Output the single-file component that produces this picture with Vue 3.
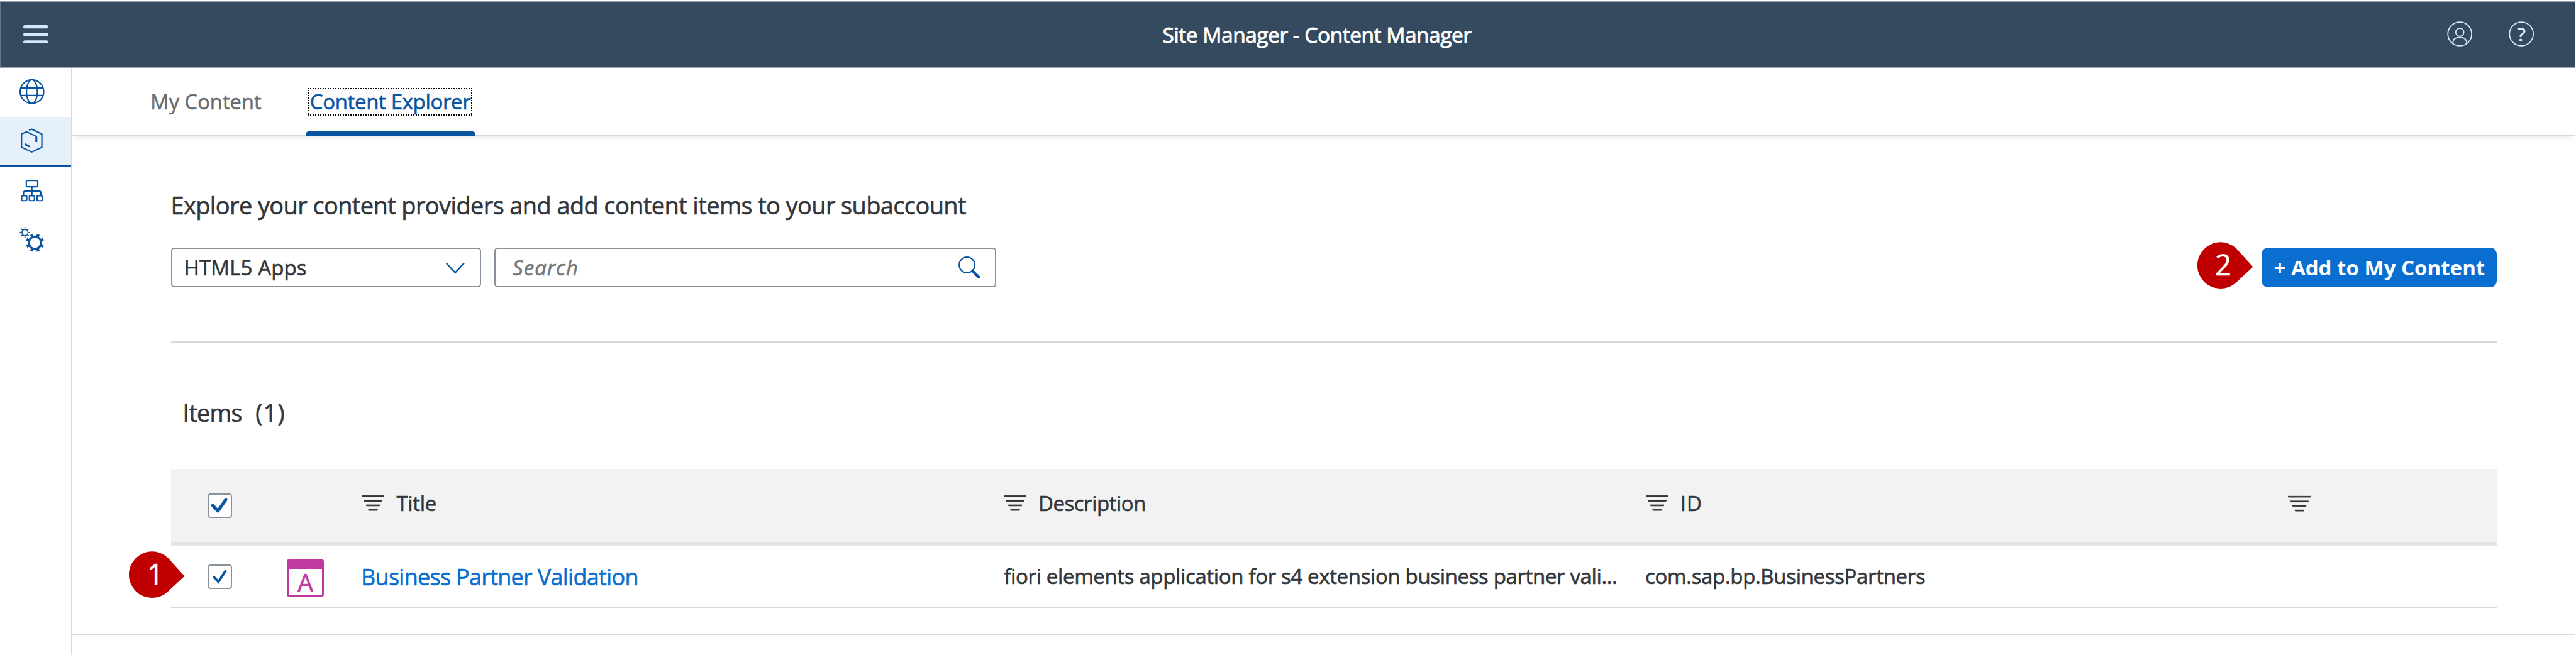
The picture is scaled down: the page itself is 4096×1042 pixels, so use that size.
<script setup>
const columns = [
  { key: 'title', label: 'Title' },
  { key: 'description', label: 'Description' },
  { key: 'id', label: 'ID' },
  { key: 'actions', label: '' },
]
const filterLines = [
  'M0 1.4H36.6L35.9 3H0.7Z',
  'M3.6 9H33L32.3 10.7H4.3Z',
  'M7.2 16.3H29.4L28.7 18H7.9Z',
  'M10.9 23.6H25.7L25 25.3H11.6Z',
]
</script>

<template>
  <div class="app">
    <header class="shell">
      <svg class="menu" viewBox="0 0 40 30">
        <path d="M2.7 2.7H37.3M2.7 15H37.3M2.7 27.3H37.3" />
      </svg>
      <h1 class="shell-title">Site Manager - Content Manager</h1>
      <div class="shell-actions">
        <svg class="shell-icon" viewBox="-3 -3 47 47">
          <circle cx="20.5" cy="20.3" r="19.2" />
          <circle cx="20.5" cy="17.6" r="6.5" />
          <path d="M9.2 35.2C9.4 29 13 25.7 20.5 25.7S31.6 29 31.8 35.2" />
        </svg>
        <svg class="shell-icon" viewBox="-3 -3 47 47">
          <circle cx="20.5" cy="20.3" r="19.2" />
          <text x="20.5" y="32" text-anchor="middle">?</text>
        </svg>
      </div>
    </header>

    <div class="body">
      <nav class="side">
        <a class="side-item">
          <svg viewBox="0 0 40 40">
            <circle cx="20" cy="20" r="19" />
            <ellipse cx="20" cy="20" rx="8.8" ry="19" />
            <path d="M2 14H38M2 26.2H38" />
          </svg>
        </a>
        <a class="side-item selected">
          <svg viewBox="0 0 40 40">
            <path d="M15.3 3.4L19.7 1.5L36 9.3V30.7L19.7 38.4L3.3 30.7V9.3L11.3 5.7L27.3 13.3V22.4" />
            <path class="thick" d="M8.3 25.4L16.3 29.6M27.1 14V22.4" />
          </svg>
        </a>
        <a class="side-item">
          <svg viewBox="0 0 40 40">
            <rect x="11" y="4.3" width="18.4" height="10" rx="1.6" />
            <path d="M20 14.3V28.5M6.5 28.5V24.3Q6.5 21.2 9.8 21.2H31.2Q34.5 21.2 34.5 24.3V28.5" />
            <rect x="3.5" y="28.7" width="8.2" height="8" rx="1.8" />
            <rect x="15.9" y="28.7" width="8.2" height="8" rx="1.8" />
            <rect x="28.3" y="28.7" width="8.2" height="8" rx="1.8" />
          </svg>
        </a>
        <a class="side-item">
          <svg viewBox="0 0 40 40">
            <circle cx="8.8" cy="9" r="4.9" stroke-width="1.7" />
            <circle cx="8.8" cy="9" r="7" stroke-width="3" pathLength="16" stroke-dasharray="0.6 1.4" stroke-dashoffset="0.3" />
            <circle cx="24.9" cy="25.6" r="9.9" stroke-width="3.4" />
            <circle cx="24.9" cy="25.6" r="12.6" stroke-width="4" pathLength="16" stroke-dasharray="0.9 1.1" stroke-dashoffset="-0.55" />
          </svg>
        </a>
      </nav>

      <main class="main">
        <div class="tabs">
          <a class="tab tab-first"><span class="tab-text">My Content</span></a>
          <a class="tab active"><span class="tab-text focus">Content Explorer</span></a>
        </div>

        <section class="page">
          <h2 class="lead">Explore your content providers and add content items to your subaccount</h2>

          <div class="controls">
            <div class="select">
              <span class="select-text">HTML5 Apps</span>
              <svg class="chevron" viewBox="0 0 30 18"><path d="M1.2 1.3L14.9 15.9L28.6 1.3" /></svg>
            </div>
            <div class="search">
              <span class="search-text">Search</span>
              <svg class="lens" viewBox="0 0 36 36">
                <circle cx="13.7" cy="13.7" r="12.6" />
                <path d="M22.6 23.4L32.5 33" />
              </svg>
            </div>
            <button class="add">+ Add to My Content</button>
            <svg class="pin pin-two" viewBox="0 0 90 76">
              <path d="M62.5 10.3L89.4 40L62.5 65A37.3 37.3 0 1 1 62.5 10.3Z" />
              <text x="41.5" y="53.6" text-anchor="middle">2</text>
            </svg>
          </div>

          <div class="list-title"><span class="items">Items</span><span class="count">(1)</span></div>

          <div class="table">
            <div class="row head">
              <div class="cell cell-check">
                <svg class="check" viewBox="0 0 39.5 39.5">
                  <rect x="1" y="1" width="37.5" height="37.5" rx="3.5" />
                  <path class="bold" d="M8.3 19.3L16.8 28.3L29.4 10" />
                </svg>
              </div>
              <div class="cell cell-icon"></div>
              <div v-for="col in columns" :key="col.key" class="cell cell-head" :class="'col-' + col.key">
                <svg class="filter" viewBox="0 0 36.6 27">
                  <path v-for="line in filterLines" :key="line" :d="line" />
                </svg>
                <span class="head-text">{{ col.label }}</span>
              </div>
            </div>

            <div class="row item">
              <div class="cell cell-check">
                <svg class="check" viewBox="0 0 39.5 39.5">
                  <rect x="1" y="1" width="37.5" height="37.5" rx="3.5" />
                  <path d="M9.2 19L17.5 28L29.8 9.2" />
                </svg>
              </div>
              <div class="cell cell-icon"><div class="tile">A</div></div>
              <div class="cell col-title"><a class="link">Business Partner Validation</a></div>
              <div class="cell col-description"><span class="value">fiori elements application for s4 extension business partner vali...</span></div>
              <div class="cell col-id"><span class="value id-value">com.sap.bp.BusinessPartners</span></div>
              <div class="cell col-actions"></div>
              <svg class="pin pin-one" viewBox="0 0 90 76">
                <path d="M62.5 10.3L89.4 40L62.5 65A37.3 37.3 0 1 1 62.5 10.3Z" />
                <text x="42.5" y="53.4" text-anchor="middle">1</text>
              </svg>
            </div>
          </div>
        </section>
        <div class="page-end"></div>
      </main>
    </div>
  </div>
</template>

<style>
body {
  margin: 0;
  background: #fff;
}
</style>

<style scoped>
.app {
  width: 4096px;
  height: 1042px;
  overflow: hidden;
  display: flex;
  flex-direction: column;
  background: #fff;
  color: #32363a;
  font-family: "Open Sans", "Noto Sans", sans-serif;
  white-space: nowrap;
  -webkit-text-stroke: 0.6px currentColor;
}
svg {
  display: block;
  flex: none;
  fill: none;
}

/* Shell bar */
.shell {
  box-sizing: border-box;
  flex: none;
  height: 106px;
  margin: 2px 1px 0 0;
  padding-left: 35.6px;
  display: flex;
  align-items: center;
  background: #354a5f;
  border: 1px solid #9aa5af;
  border-left-color: #64758a;
  border-right: 0;
}
.menu {
  width: 39.5px;
  height: 29.7px;
  margin-bottom: 1px;
  stroke: #d1e8ff;
  stroke-width: 5.4;
  stroke-linecap: round;
}
.shell-title {
  margin: 0 0 1px 1772.4px;
  flex: 1;
  color: #fff;
  font-size: 33.5px;
  line-height: 46px;
  font-weight: 400;
  letter-spacing: -0.48px;
  -webkit-text-stroke-width: 0.9px;
}
.shell-actions {
  display: flex;
  gap: 51.6px;
  padding-right: 63px;
}
.shell-icon {
  width: 46.4px;
  height: 46.4px;
  margin-bottom: 1px;
  stroke: #d1e8ff;
  stroke-width: 1.8;
}
.shell-icon text {
  fill: #d1e8ff;
  stroke: none;
  font-size: 31px;
  font-weight: 600;
  -webkit-text-stroke-width: 0;
}

/* Layout */
.body {
  flex: 1;
  display: flex;
  min-height: 0;
}
.side {
  box-sizing: border-box;
  width: 115px;
  flex: none;
  border-right: 2px solid #d9d9d9;
  background: #fff;
  z-index: 1;
}
.side-item {
  box-sizing: border-box;
  height: 78.4px;
  padding-right: 10.6px;
  display: flex;
  align-items: center;
  justify-content: center;
  border-bottom: 3px solid transparent;
}
.side-item.selected {
  background: #e5f0fa;
  border-bottom-color: #0854a0;
}
.side-item svg {
  width: 39.5px;
  height: 39.5px;
  stroke: #0854a0;
  stroke-width: 2.2;
}
.side-item .thick {
  stroke-width: 3;
}
.main {
  flex: 1;
  min-width: 0;
  padding-right: 1px;
  display: flex;
  flex-direction: column;
}

/* Tabs */
.tabs {
  box-sizing: border-box;
  flex: none;
  height: 107.5px;
  padding-left: 123.5px;
  display: flex;
  border-bottom: 2px solid #d9d9d9;
  box-shadow: 0 8px 8px -5px rgba(0, 0, 0, 0.08);
}
.tab {
  box-sizing: border-box;
  height: 107.5px;
  display: flex;
  align-items: center;
  font-size: 32.5px;
  color: #6a6d70;
}
.tab-first {
  width: 247.2px;
  text-indent: 0.8px;
  letter-spacing: 0.116px;
}
.tab.active {
  position: relative;
  width: 270.3px;
  justify-content: center;
  font-size: 33px;
  letter-spacing: -0.35px;
  color: #0854a0;
}
.tab.active::after {
  content: "";
  position: absolute;
  left: 0;
  right: 0;
  bottom: 0;
  height: 7px;
  border-radius: 5px 5px 0 0;
  background: #0854a0;
}
.focus {
  box-sizing: border-box;
  width: 261px;
  height: 44px;
  line-height: 40px;
  text-indent: 0.4px;
  border: 2px dotted #000;
}

/* Page */
.page {
  padding-left: 157.3px;
  width: 3698.1px;
}
.lead {
  margin: 84px 0 42.5px -0.8px;
  font-size: 38px;
  line-height: 52px;
  font-weight: 400;
  letter-spacing: -0.628px;
}
.controls {
  position: relative;
  display: flex;
  height: 63px;
  padding-bottom: 86px;
  border-bottom: 2px solid #d9d9d9;
}
.select,
.search {
  box-sizing: border-box;
  display: flex;
  align-items: center;
  justify-content: space-between;
  border: 2px solid #89919a;
  border-radius: 5px;
  font-size: 33px;
}
.select {
  width: 493px;
  padding: 0 24.5px 0 18.3px;
}
.select-text {
  letter-spacing: 0.123px;
}
.chevron {
  width: 29.7px;
  height: 17.8px;
  margin-top: 3px;
  stroke: #0854a0;
  stroke-width: 2.4;
  stroke-linecap: round;
}
.search {
  width: 798px;
  margin-left: 20.7px;
  padding: 0 22px 0 27px;
}
.search-text {
  color: #74777a;
  font-style: italic;
  letter-spacing: 1.041px;
}
.lens {
  width: 35.6px;
  height: 35.6px;
  stroke: #0854a0;
  stroke-width: 2.2;
}
.lens path {
  stroke-width: 4.4;
  stroke-linecap: round;
}
.add {
  width: 374.6px;
  margin-left: auto;
  padding: 0 0 0 19.6px;
  border: 0;
  border-radius: 10px;
  background: #0a6ed1;
  color: #fff;
  text-align: left;
  font-family: inherit;
  font-size: 33px;
  font-weight: 700;
  letter-spacing: 0.026px;
  -webkit-text-stroke-width: 0;
}
.list-title {
  display: flex;
  height: 52px;
  margin: 85.5px 0 63px 18.3px;
  font-size: 37.5px;
  line-height: 52px;
}
.items {
  width: 115.7px;
  letter-spacing: -0.664px;
}
.count {
  letter-spacing: 1.395px;
}

/* Table */
.row {
  position: relative;
  box-sizing: border-box;
  display: flex;
}
.cell {
  box-sizing: border-box;
  display: flex;
  align-items: center;
}
.head {
  height: 122.5px;
  background: #f2f2f2;
  border-bottom: 5px solid #e4e4e4;
}
.item {
  height: 100px;
  border-bottom: 2px solid #d9d9d9;
}
.cell-check {
  width: 126px;
  padding-left: 57.9px;
}
.check {
  width: 39px;
  height: 39px;
  stroke: #0854a0;
  stroke-width: 3.8;
}
.check rect {
  fill: #fff;
  stroke: #89919a;
  stroke-width: 2;
}
.check .bold {
  stroke-width: 5;
  stroke-linecap: round;
  stroke-linejoin: round;
}
.cell-icon {
  width: 176.9px;
  padding-left: 57.9px;
}
.tile {
  box-sizing: border-box;
  width: 59px;
  height: 59px;
  margin-top: 4.6px;
  border: 3px solid #bf399e;
  border-top-width: 15px;
  border-radius: 3px;
  color: #bf399e;
  font-size: 39px;
  line-height: 41px;
  text-align: center;
}
.col-title {
  width: 1020.6px;
}
.col-description {
  width: 1020.8px;
}
.col-id {
  width: 1021.4px;
}
.cell-head {
  gap: 19px;
  padding-bottom: 7px;
  font-size: 33px;
}
.filter {
  width: 36.2px;
  height: 26.7px;
  margin-bottom: 1px;
}
.filter path {
  fill: #32363a;
  stroke: #32363a;
  stroke-width: 1;
}
.col-title .head-text {
  letter-spacing: -0.279px;
}
.col-description .head-text {
  letter-spacing: -0.467px;
}
.col-id .head-text {
  letter-spacing: 1px;
}
.col-actions .filter {
  margin-top: 2px;
}
.link {
  margin: 0 0 0 -1.2px;
  font-size: 36px;
  color: #0a6ed1;
  letter-spacing: -0.729px;
}
.value {
  margin: 0 0 2px 0.5px;
  font-size: 33px;
  letter-spacing: -0.356px;
}
.id-value {
  margin-left: -0.5px;
  letter-spacing: -0.326px;
}

/* Callout pins */
.pin {
  position: absolute;
  width: 89px;
  height: 75.1px;
}
.pin path {
  fill: #c00000;
}
.pin text {
  fill: #fff;
  stroke: #fff;
  stroke-width: 0.5;
  font-size: 46px;
  -webkit-text-stroke-width: 0;
}
.pin-one {
  left: -67.2px;
  top: 9.3px;
}
.pin-two {
  left: 3222px;
  top: -8.6px;
}
.page-end {
  margin-top: 39.5px;
  border-top: 2px solid #d9d9d9;
}
</style>
